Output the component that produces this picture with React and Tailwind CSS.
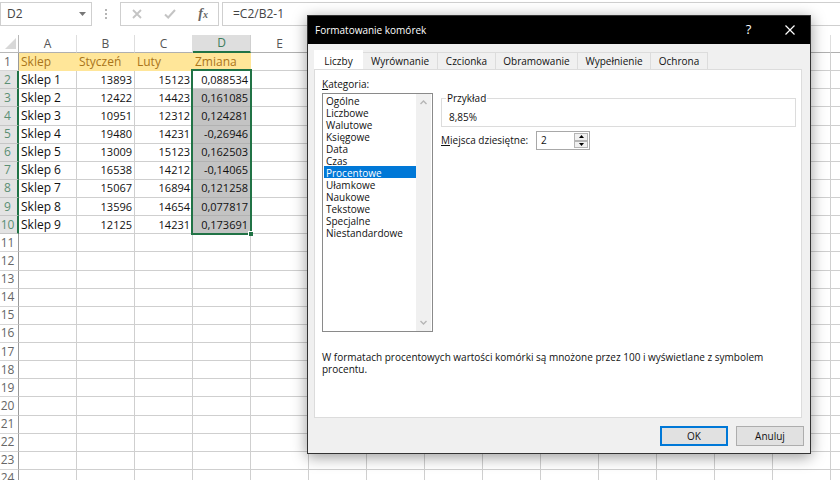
import React from "react";

const columns = ["A", "B", "C", "D", "E", "F", "G", "H", "I", "J", "K", "L", "M", "N", "O"];
const labelledColumns = 5;

const shops = [
  ["Sklep 1", "13893", "15123", "0,088534"],
  ["Sklep 2", "12422", "14423", "0,161085"],
  ["Sklep 3", "10951", "12312", "0,124281"],
  ["Sklep 4", "19480", "14231", "-0,26946"],
  ["Sklep 5", "13009", "15123", "0,162503"],
  ["Sklep 6", "16538", "14212", "-0,14065"],
  ["Sklep 7", "15067", "16894", "0,121258"],
  ["Sklep 8", "13596", "14654", "0,077817"],
  ["Sklep 9", "12125", "14231", "0,173691"],
];

const headings = ["Sklep", "Styczeń", "Luty", "Zmiana"];

const rows = [headings, ...shops, ...Array.from({ length: 14 }, () => [])];

const categories = [
  "Ogólne",
  "Liczbowe",
  "Walutowe",
  "Księgowe",
  "Data",
  "Czas",
  "Procentowe",
  "Ułamkowe",
  "Naukowe",
  "Tekstowe",
  "Specjalne",
  "Niestandardowe",
];

const tabs = [
  ["Liczby", "w-[49px]"],
  ["Wyrównanie", "w-[75px]"],
  ["Czcionka", "w-[58px]"],
  ["Obramowanie", "w-[82px]"],
  ["Wypełnienie", "w-[73px]"],
  ["Ochrona", "w-[57px]"],
];

function FormulaBar() {
  return (
    <div className="flex h-[24px] text-[12px] text-[#444]">
      <div className="flex w-[92px] items-center border border-[#cfcfcf] bg-white pr-[5px]">
        <input
          aria-label="Pole nazwy"
          defaultValue="D2"
          className="min-w-0 flex-1 bg-transparent pl-[6px] outline-none"
        />
        <button type="button" aria-label="Lista nazw">
          <svg width="7" height="4" viewBox="0 0 7 4" fill="#777">
            <path d="M0 0h7L3.500 4z" />
          </svg>
        </button>
      </div>
      <div className="flex w-[28px] flex-col items-center justify-center gap-[2px]">
        <i className="size-[2px] bg-[#b5b5b5]" />
        <i className="size-[2px] bg-[#b5b5b5]" />
        <i className="size-[2px] bg-[#b5b5b5]" />
      </div>
      <div className="flex w-[99px] items-center justify-between border border-[#cfcfcf] bg-white pr-[10px] pl-[11px]">
        <button type="button" aria-label="Anuluj wpis">
          <svg width="10" height="10" viewBox="0 0 10 10" stroke="#c4c4c4" strokeWidth="1.800" fill="none">
            <path d="M1 1l8 8M9 1L1 9" />
          </svg>
        </button>
        <button type="button" aria-label="Wpis">
          <svg width="12" height="10" viewBox="0 0 12 10" stroke="#c4c4c4" strokeWidth="2" fill="none">
            <path d="M1 5.500l3.200 3L11 1" />
          </svg>
        </button>
        <button
          type="button"
          aria-label="Wstaw funkcję"
          className="font-['Liberation_Serif',serif] text-[14px] leading-none font-bold italic text-[#666]"
        >
          f<span className="text-[10px]">x</span>
        </button>
      </div>
      <input
        aria-label="Pasek formuły"
        defaultValue="=C2/B2-1"
        className="ml-[3px] min-w-0 flex-1 border border-r-0 border-[#cfcfcf] bg-white pl-[10px] outline-none"
      />
    </div>
  );
}

function cellClass(rowIndex, colIndex) {
  if (rowIndex === 0 && colIndex < 4)
    return "bg-[#ffe699] border-[#ffe699] text-[12px] text-[#a9741a] pl-[2px] text-left";
  if (colIndex === 3 && rowIndex > 1 && rowIndex < 10) return "bg-[#c3c3c3] border-[#b2b2b2] pr-[2px] text-right";
  if (colIndex === 0) return "border-[#cfcfcf] text-[12px] pl-[2px] text-left";
  return "border-[#cfcfcf] pr-[2px] text-right";
}

function Sheet() {
  return (
    <table className="h-[453px] w-[889px] table-fixed border-separate border-spacing-0 text-[11px] leading-[16px] text-[#111]">
      <colgroup>
        <col className="w-[19px]" />
        {columns.map((c) => (
          <col key={c} className="w-[58px]" />
        ))}
      </colgroup>
      <thead>
        <tr className="h-[18px] text-[12px] text-[#555]">
          <th className="border-r border-b border-[#b8b8b8] p-0">
            <svg width="11" height="11" viewBox="0 0 11 11" fill="#d8d8d8" className="ml-auto mr-[2px]">
              <path d="M11 0v11H0z" />
            </svg>
          </th>
          {columns.map((c, i) => (
            <th
              key={c}
              scope="col"
              className={
                c === "D"
                  ? "border-r border-b-2 border-r-[#cfcfcf] border-b-[#217346] bg-[#dedede] p-0 font-normal text-[#3f7d5c]"
                  : "border-r border-b border-r-[#dedede] border-b-[#b0b0b0] p-0 font-normal"
              }
            >
              {i < labelledColumns && c}
            </th>
          ))}
        </tr>
      </thead>
      <tbody>
        {rows.map((row, r) => (
          <tr key={r} className="h-[18px]">
            <th
              scope="row"
              className={
                r > 0 && r < 10
                  ? "border-r-2 border-b border-r-[#217346] border-b-[#c6c6c6] bg-[#e3e3e3] py-0 pr-[2px] pl-0 text-center text-[12px] font-normal text-[#5b8f74]"
                  : "border-r border-b border-r-[#9a9a9a] border-b-[#d6d6d6] py-0 pr-[3px] pl-0 text-center text-[12px] font-normal text-[#666]"
              }
            >
              {r + 1}
            </th>
            {columns.map((c, i) => (
              <td key={c} className={`relative border-r border-b py-0 whitespace-nowrap ${cellClass(r, i)}`}>
                {row[i]}
                {r === 1 && i === 3 && (
                  <span className="absolute -top-[2px] -left-[2px] z-10 h-[166px] w-[61px] border-2 border-[#217346]">
                    <i className="absolute -right-[3px] -bottom-[3px] size-[5px] border-t border-l border-white bg-[#217346]" />
                  </span>
                )}
              </td>
            ))}
          </tr>
        ))}
      </tbody>
    </table>
  );
}

function TitleBar() {
  return (
    <header className="flex h-[28px] items-center bg-black text-white">
      <h1 className="flex-1 pl-[7px] text-[10px]">Formatowanie komórek</h1>
      <button type="button" aria-label="Pomoc" className="w-[41px] text-[13px]">
        ?
      </button>
      <button type="button" aria-label="Zamknij" className="flex w-[41px] justify-center">
        <svg width="10" height="10" viewBox="0 0 10 10" stroke="#fff" strokeWidth="1.200" fill="none">
          <path d="M.5.5l9 9M9.500.5l-9 9" />
        </svg>
      </button>
    </header>
  );
}

function CategoryList() {
  return (
    <div className="w-[111px] shrink-0">
      <label htmlFor="category" className="block h-[16px] leading-[14px]">
        <u>K</u>ategoria:
      </label>
      <div className="flex h-[239px] border border-[#8a8a8a] bg-white px-px">
        <select
          id="category"
          size={12}
          defaultValue="Procentowe"
          className="min-w-0 flex-1 appearance-none overflow-hidden border-0 bg-transparent outline-none"
        >
          {categories.map((name) => (
            <option
              key={name}
              className="h-[12px] min-h-0 p-0 pb-[2px] pl-[2px] leading-[10px] checked:bg-[linear-gradient(#0078d7,#0078d7)] checked:[-webkit-text-fill-color:#fff]"
            >
              {name}
            </option>
          ))}
        </select>
        <div className="flex w-[15px] flex-col items-center justify-between bg-[#f0f0f0] py-[6px]">
          <svg width="7" height="5" viewBox="0 0 7 5" stroke="#b5b5b5" strokeWidth="1.400" fill="none">
            <path d="M.5 4l3-3 3 3" />
          </svg>
          <svg width="7" height="5" viewBox="0 0 7 5" stroke="#b5b5b5" strokeWidth="1.400" fill="none">
            <path d="M.5 1l3 3 3-3" />
          </svg>
        </div>
      </div>
    </div>
  );
}

function PercentOptions() {
  return (
    <div className="min-w-0 flex-1 pt-[15px]">
      <fieldset className="h-[35px] border border-[#dcdcdc] pl-[7px]">
        <legend className="-ml-[3px] px-[1px] leading-[12px]">Przykład</legend>
        <output className="block pt-[7px] leading-[12px]">8,85%</output>
      </fieldset>
      <div className="mt-[4px] flex items-center">
        <label htmlFor="decimals" className="w-[95px] whitespace-nowrap">
          <u>M</u>iejsca dziesiętne:
        </label>
        <div className="flex h-[19px] w-[54px] border border-[#a8a8a8] bg-white p-px">
          <input id="decimals" defaultValue="2" className="min-w-0 flex-1 pl-[3px] outline-none" />
          <div className="flex w-[14px] flex-col">
            <button
              type="button"
              aria-label="Więcej"
              className="flex flex-1 items-center justify-center border border-[#b5b5b5] bg-[#f0f0f0]"
            >
              <svg width="5" height="3" viewBox="0 0 5 3">
                <path d="M0 3h5L2.500 0z" />
              </svg>
            </button>
            <button
              type="button"
              aria-label="Mniej"
              className="flex flex-1 items-center justify-center border border-[#b5b5b5] bg-[#f0f0f0]"
            >
              <svg width="5" height="3" viewBox="0 0 5 3">
                <path d="M0 0h5L2.500 3z" />
              </svg>
            </button>
          </div>
        </div>
      </div>
    </div>
  );
}

function FormatDialog() {
  return (
    <section
      role="dialog"
      aria-label="Formatowanie komórek"
      className="absolute top-[15px] left-[307px] z-20 w-[504px] border border-[#333] bg-[#f0f0f0] text-[10px] text-[#111] shadow-[0_3px_14px_rgba(0,0,0,0.4)]"
    >
      <TitleBar />
      <div className="pt-[6px] pr-[8px] pl-[6px]">
        <div role="tablist" className="flex h-[19px] items-end">
          {tabs.map(([name, width], i) => (
            <button
              key={name}
              type="button"
              role="tab"
              aria-selected={i === 0}
              className={`${width} ${
                i === 0
                  ? "h-[19px] bg-white pt-[3px]"
                  : "h-[17px] border-t border-r border-[#dcdcdc] bg-[#f0f0f0]"
              }`}
            >
              {name}
            </button>
          ))}
        </div>
        <div role="tabpanel" className="h-[349px] border border-[#dcdcdc] bg-white pt-[7px] pr-[5px] pl-[7px]">
          <div className="flex gap-[8px]">
            <CategoryList />
            <PercentOptions />
          </div>
          <p className="mt-[19px] pr-[20px] leading-[12px]">
            W formatach procentowych wartości komórki są mnożone przez 100 i wyświetlane z symbolem procentu.
          </p>
        </div>
      </div>
      <footer className="flex justify-end gap-[8px] pt-[8px] pr-[6px] pb-[7px]">
        <button type="button" className="h-[20px] w-[68px] border-2 border-[#0078d7] bg-[#e1e1e1]">
          OK
        </button>
        <button type="button" className="h-[20px] w-[68px] border border-[#adadad] bg-[#e1e1e1]">
          Anuluj
        </button>
      </footer>
    </section>
  );
}

export default function App() {
  return (
    <main className="relative h-screen w-full overflow-hidden bg-white pt-[2px] font-['Open_Sans','Noto_Sans',sans-serif]">
      <FormulaBar />
      <div className="pt-[9px]">
        <Sheet />
      </div>
      <FormatDialog />
    </main>
  );
}
